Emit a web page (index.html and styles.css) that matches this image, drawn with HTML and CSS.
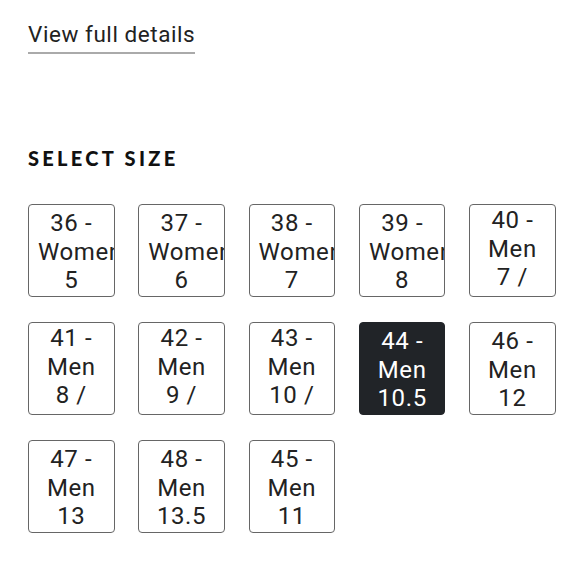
FILE: index.html
```html
<!DOCTYPE html>
<html>
<head>
<meta charset="utf-8">
<link rel="stylesheet" href="styles.css">
</head>
<body>
<div class="page">
  <a class="details-link" href="#">View full details</a>
  <h2 class="size-title">SELECT SIZE</h2>
  <div class="size-grid">
    <div class="size-opt" role="button">36 - Women 5</div>
    <div class="size-opt" role="button">37 - Women 6</div>
    <div class="size-opt" role="button">38 - Women 7</div>
    <div class="size-opt" role="button">39 - Women 8</div>
    <div class="size-opt long" role="button">40 - Men 7 / Women 8.5</div>
    <div class="size-opt long" role="button">41 - Men 8 / Women 9.5</div>
    <div class="size-opt long" role="button">42 - Men 9 / Women 10.5</div>
    <div class="size-opt long" role="button">43 - Men 10 / Women 11.5</div>
    <div class="size-opt selected" role="button">44 - Men 10.5</div>
    <div class="size-opt" role="button">46 - Men 12</div>
    <div class="size-opt" role="button">47 - Men 13</div>
    <div class="size-opt" role="button">48 - Men 13.5</div>
    <div class="size-opt" role="button">45 - Men 11</div>
  </div>
</div>
</body>
</html>
```
FILE: styles.css
```css
html, body {
  margin: 0;
  padding: 0;
  background: #fff;
}
.page {
  padding: 20px 28px 0 28px;
  font-family: Roboto, "Liberation Sans", sans-serif;
  color: #222;
}
.details-link {
  display: inline-block;
  font-size: 22.5px;
  line-height: 28px;
  color: #222;
  text-decoration: none;
  border-bottom: 2px solid #aaa;
  padding-bottom: 4px;
  letter-spacing: 0.56px;
}
.size-title {
  margin: 91px 0 0 0;
  font-family: Lato, "Liberation Sans", sans-serif;
  font-weight: 900;
  font-size: 20px;
  line-height: 26px;
  letter-spacing: 3.3px;
  color: #111;
}
.size-grid {
  margin-top: 33px;
  display: grid;
  grid-template-columns: repeat(5, 86.5px);
  grid-auto-rows: 93px;
  column-gap: 23.8px;
  row-gap: 25px;
}
.size-opt {
  box-sizing: border-box;
  height: 93px;
  padding: 4px 9px 0 9px;
  border: 1.5px solid #666;
  border-radius: 4px;
  background: #fff;
  color: #222;
  font-family: Roboto, "Liberation Sans", sans-serif;
  font-size: 24px;
  line-height: 28.5px;
  letter-spacing: 0.6px;
  text-align: center;
  overflow: hidden;
  cursor: pointer;
}
.size-opt.long {
  padding-top: 1px;
}
.size-opt.selected {
  background: #212428;
  border-color: #212428;
  color: #fff;
}
```
